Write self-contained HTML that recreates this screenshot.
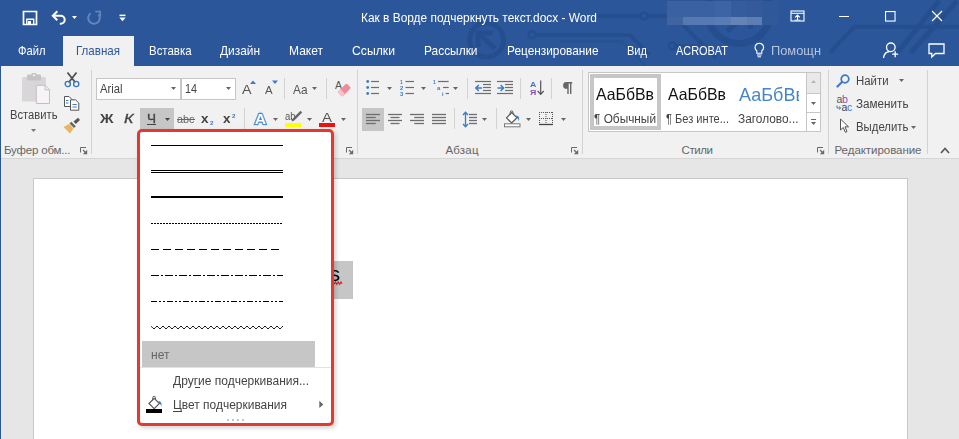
<!DOCTYPE html>
<html><head><meta charset="utf-8"><title>Word</title>
<style>
html,body{margin:0;padding:0;}
body{width:959px;height:439px;overflow:hidden;position:relative;background:#e6e6e6;font-family:"Liberation Sans",sans-serif;}
.r{position:absolute;display:block;}
.t{position:absolute;white-space:nowrap;line-height:1;transform-origin:0 0;display:block;}
</style></head><body>
<div class="r" style="left:0px;top:0px;width:959px;height:66px;background:#2b579a;"></div>
<svg class="r" style="left:0px;top:0px;" width="959" height="66" viewBox="0 0 959 66">
<g fill="none" stroke="#254e8f" stroke-width="4" stroke-linejoin="round">
<circle cx="486.500" cy="40" r="17" stroke-width="5"/>
<path d="M495 48.500L478.500 33.500M478 47V33H492.500" stroke-width="5"/>
<circle cx="532" cy="34.700" r="3.500" stroke-width="2.500"/>
<path d="M536.500 35H630L650 55" stroke-width="3.500"/>
<path d="M560 41.500H622L646 66" stroke-width="2.500" opacity="0.600"/>
<circle cx="644" cy="16" r="3.500" stroke-width="2.500"/>
<path d="M597 16H640M648 16H670" stroke-width="3.500"/>
<circle cx="672.500" cy="45.800" r="3.500" stroke-width="2.500"/>
<path d="M676.500 46H700" stroke-width="3"/>
<path d="M683 25L716 58" stroke-width="4"/>
<circle cx="739" cy="12" r="31.500" stroke-width="7"/>
<path d="M727 31L738 22" stroke-width="5"/>
<rect x="748" y="24" width="5" height="5" fill="#254e8f" stroke="none"/>
<path d="M830 52.500L854.500 26.700H959" stroke-width="4"/>
<path d="M897 53L939 1" stroke-width="5"/>
<path d="M910.500 53L957 1" stroke-width="5"/>
</g></svg>
<div class="r" style="left:0px;top:66px;width:959px;height:92px;background:#f1f1f1;"></div>
<div class="r" style="left:0px;top:158px;width:959px;height:1px;background:#d5d5d5;"></div>
<div class="r" style="left:0px;top:0px;width:1px;height:439px;background:#2b579a;"></div>
<div class="r" style="left:63px;top:36px;width:71px;height:31px;background:#f1f1f1;"></div>
<div class="r" style="left:33px;top:178px;width:875px;height:262px;background:#fff;box-sizing:border-box;border:1px solid #c8c8c8;border-bottom:none;"></div>
<span class="t" style="left:361.00px;top:10.50px;font-size:13px;color:#fff;transform:scaleX(0.9157);">Как в Ворде подчеркнуть текст.docx - Word</span>
<span class="t" style="left:17.50px;top:44.00px;font-size:13px;color:#fff;transform:scaleX(0.8604);">Файл</span>
<span class="t" style="left:76.00px;top:44.00px;font-size:13px;color:#2b579a;transform:scaleX(0.8892);">Главная</span>
<span class="t" style="left:149.00px;top:44.00px;font-size:13px;color:#fff;transform:scaleX(0.8796);">Вставка</span>
<span class="t" style="left:220.00px;top:44.00px;font-size:13px;color:#fff;transform:scaleX(0.9154);">Дизайн</span>
<span class="t" style="left:289.00px;top:44.00px;font-size:13px;color:#fff;transform:scaleX(0.9241);">Макет</span>
<span class="t" style="left:352.00px;top:44.00px;font-size:13px;color:#fff;transform:scaleX(0.9395);">Ссылки</span>
<span class="t" style="left:424.00px;top:44.00px;font-size:13px;color:#fff;transform:scaleX(0.9169);">Рассылки</span>
<span class="t" style="left:507.00px;top:44.00px;font-size:13px;color:#fff;transform:scaleX(0.9115);">Рецензирование</span>
<span class="t" style="left:627.00px;top:44.00px;font-size:13px;color:#fff;transform:scaleX(0.8504);">Вид</span>
<span class="t" style="left:676.00px;top:44.00px;font-size:13px;color:#fff;transform:scaleX(0.8404);">ACROBAT</span>
<span class="t" style="left:771.00px;top:44.00px;font-size:13px;color:#b4c4de;transform:scaleX(0.9878);">Помощн</span>
<svg class="r" style="left:22px;top:10px;" width="16" height="16" viewBox="0 0 16 16"><path d="M1.500 1.500H14.500V14.500H1.500Z" fill="none" stroke="#fff" stroke-width="1.700"/><path d="M4.800 14.500V9.200H11.700V14.500" fill="none" stroke="#fff" stroke-width="1.400"/><rect x="6" y="11" width="3" height="3.500" fill="#fff"/></svg>
<svg class="r" style="left:51px;top:10px;" width="16" height="15" viewBox="0 0 16 15"><path d="M2.500 5.700H9.700A4 4 0 0 1 9.700 13.700H8.800" fill="none" stroke="#fff" stroke-width="2"/><path d="M6.300 1.200L1.800 5.700L6.300 10.200" fill="none" stroke="#fff" stroke-width="2"/></svg>
<svg class="r" style="left:72px;top:16px;" width="5" height="3" viewBox="0 0 5 3"><path d="M0 0H5L2.5 3Z" fill="#fff"/></svg>
<svg class="r" style="left:86px;top:10px;" width="16" height="15" viewBox="0 0 16 15"><path d="M4.670 3.250A5.800 5.800 0 1 0 12.440 4.270" fill="none" stroke="#6484bd" stroke-width="2"/><path d="M9.300 1.700H14.200V6.600" fill="none" stroke="#6484bd" stroke-width="1.800"/></svg>
<svg class="r" style="left:119px;top:14px;" width="7" height="8" viewBox="0 0 7 8"><rect x="0.500" y="0.600" width="6" height="1.500" fill="#fff"/><path d="M0.300 3.500H6.700L3.500 7.200Z" fill="#fff"/></svg>
<svg class="r" style="left:790px;top:10px;" width="15" height="12" viewBox="0 0 15 12"><rect x="1" y="1" width="13" height="10" fill="none" stroke="#fff" stroke-width="1.100"/><path d="M1 3.300H14" stroke="#fff" stroke-width="1"/><path d="M7.500 10V5.200M5.200 7.300L7.500 5L9.800 7.300" fill="none" stroke="#fff" stroke-width="1.100"/><path d="M4.500 10.200H10.500" stroke="#fff" stroke-width="0.800"/></svg>
<div class="r" style="left:839px;top:16px;width:10px;height:1px;background:#fff;"></div>
<svg class="r" style="left:885px;top:11px;" width="11" height="11" viewBox="0 0 11 11"><rect x="0.550" y="0.550" width="9.500" height="9.500" fill="none" stroke="#fff" stroke-width="1.100"/></svg>
<svg class="r" style="left:931px;top:10px;" width="12" height="12" viewBox="0 0 12 12"><path d="M1 1L11 11M11 1L1 11" stroke="#fff" stroke-width="1.200" fill="none"/></svg>
<div class="r" style="left:667px;top:1px;width:48px;height:16px;background:#3a62a2;"></div>
<div class="r" style="left:715px;top:1px;width:16px;height:16px;background:#3d64a3;"></div>
<div class="r" style="left:731px;top:1px;width:16px;height:16px;background:#355d9d;"></div>
<div class="r" style="left:747px;top:1px;width:16px;height:16px;background:#345a9b;"></div>
<div class="r" style="left:763px;top:1px;width:15px;height:16px;background:#2e5899;"></div>
<div class="r" style="left:667px;top:17px;width:16px;height:8px;background:#41639f;"></div>
<div class="r" style="left:683px;top:17px;width:32px;height:8px;background:#5779b2;"></div>
<div class="r" style="left:715px;top:17px;width:16px;height:8px;background:#5a7cb5;"></div>
<div class="r" style="left:731px;top:17px;width:16px;height:8px;background:#6683b6;"></div>
<div class="r" style="left:747px;top:17px;width:15px;height:8px;background:#5d7db3;"></div>
<div class="r" style="left:762px;top:17px;width:16px;height:8px;background:#30599a;"></div>
<svg class="r" style="left:754px;top:42px;" width="11" height="16" viewBox="0 0 11 16"><path d="M5.300 1.200A4.200 4.200 0 0 1 7.800 8.800V11.200H2.800V8.800A4.200 4.200 0 0 1 5.300 1.200Z" fill="none" stroke="#fff" stroke-width="1.100"/><path d="M3 13H7.600M3.600 14.800H7" stroke="#fff" stroke-width="1"/></svg>
<svg class="r" style="left:882px;top:41px;" width="18" height="18" viewBox="0 0 18 18"><circle cx="8.800" cy="6.300" r="4.300" fill="none" stroke="#fff" stroke-width="1.300"/><path d="M1.500 17C2 13 4.500 10.800 7.500 10.500" fill="none" stroke="#fff" stroke-width="1.300"/><path d="M13.200 10.200V16.200M10.200 13.200H16.200" stroke="#fff" stroke-width="1.300"/></svg>
<svg class="r" style="left:927px;top:42px;" width="19" height="17" viewBox="0 0 19 17"><path d="M2 2H17V11.500H8.500L4.800 15V11.500H2Z" fill="none" stroke="#fff" stroke-width="1.300"/></svg>
<svg class="r" style="left:22px;top:73px;" width="29" height="32" viewBox="0 0 29 32"><rect x="0" y="4" width="24" height="24.500" rx="1.500" fill="#d9d6d9"/><rect x="5" y="1.500" width="14" height="6" rx="1" fill="#c6c3c6"/><rect x="9.500" y="0" width="5" height="3.500" rx="1.200" fill="#c6c3c6"/><rect x="10.800" y="1.500" width="2.400" height="1.600" fill="#f1f1f1"/><path d="M14.300 12.300H23L27.500 16.800V30.500H14.300Z" fill="#f7f4f7" stroke="#c2bfc2" stroke-width="1"/><path d="M23 12.300V16.800H27.500" fill="none" stroke="#c2bfc2" stroke-width="1"/></svg>
<span class="t" style="left:10.00px;top:109.00px;font-size:12.5px;color:#444;transform:scaleX(0.8965);">Вставить</span>
<svg class="r" style="left:31px;top:129px;" width="5" height="3" viewBox="0 0 5 3"><path d="M0 0H5L2.5 3Z" fill="#777"/></svg>
<svg class="r" style="left:64px;top:71px;" width="16" height="17" viewBox="0 0 16 17"><path d="M3.500 1.500L11.300 11.500M12.500 1.500L4.700 11.500" stroke="#505050" stroke-width="1.800" fill="none"/><circle cx="3.800" cy="13" r="2.600" fill="none" stroke="#3a78c2" stroke-width="1.400"/><circle cx="12.200" cy="13" r="2.600" fill="none" stroke="#3a78c2" stroke-width="1.400"/></svg>
<svg class="r" style="left:63px;top:96px;" width="17" height="15" viewBox="0 0 17 15"><path d="M1.500 0.500H6L9 3.500V10.500H1.500Z" fill="#fff" stroke="#555" stroke-width="1"/><path d="M3 4.500H5.500M3 7H5.500" stroke="#3a7cc6" stroke-width="1"/><path d="M7.500 3.800H12.500L15.800 7V14.200H7.500Z" fill="#fff" stroke="#555" stroke-width="1"/><path d="M9.500 8.500H13.800M9.500 11H13.800" stroke="#3a7cc6" stroke-width="1"/></svg>
<svg class="r" style="left:63px;top:117px;" width="18" height="17" viewBox="0 0 18 17"><path d="M10.500 4.500L15 0.800L17 3L12.800 7Z" fill="#555"/><path d="M8.300 4.800L12.800 9.300L11 11L6.500 6.600Z" fill="#666"/><path d="M6 7L10.500 11.500L7 16.500L0.500 10Z" fill="#eab55c"/></svg>
<span class="t" style="left:4.00px;top:145.00px;font-size:11.5px;color:#666;letter-spacing:-0.189px;">Буфер обм...</span>
<svg class="r" style="left:80px;top:147px;" width="8" height="8" viewBox="0 0 8 8"><path d="M0.500 5.500V0.500H6" fill="none" stroke="#6a6a6a" stroke-width="1"/><path d="M7.200 2.800V7.200H2.800Z" fill="#6a6a6a"/><path d="M3 3L6 6" stroke="#6a6a6a" stroke-width="1.200"/></svg>
<div class="r" style="left:91px;top:70px;width:1px;height:84px;background:#d2d2d2;"></div>
<div class="r" style="left:96px;top:78px;width:85px;height:22px;background:#fff;box-sizing:border-box;border:1px solid #c6c6c6;"></div>
<div class="r" style="left:181px;top:78px;width:55px;height:22px;background:#fff;box-sizing:border-box;border:1px solid #c6c6c6;"></div>
<span class="t" style="left:99.50px;top:83.00px;font-size:12.5px;color:#444;transform:scaleX(0.8998);">Arial</span>
<svg class="r" style="left:171px;top:87px;" width="5" height="3" viewBox="0 0 5 3"><path d="M0 0H5L2.5 3Z" fill="#666"/></svg>
<span class="t" style="left:184.50px;top:83.00px;font-size:12.5px;color:#444;transform:scaleX(0.8631);">14</span>
<svg class="r" style="left:226px;top:87px;" width="5" height="3" viewBox="0 0 5 3"><path d="M0 0H5L2.5 3Z" fill="#666"/></svg>
<span class="t" style="left:242.00px;top:82.60px;font-size:13.5px;color:#555;transform:scaleX(1.0550);">A</span>
<svg class="r" style="left:250px;top:80px;" width="6" height="4" viewBox="0 0 6 4"><path d="M0 4H6L3 0.500Z" fill="#3a7cc6"/></svg>
<span class="t" style="left:265.00px;top:85.00px;font-size:11px;color:#555;transform:scaleX(1.0359);">A</span>
<svg class="r" style="left:272px;top:80px;" width="6" height="4" viewBox="0 0 6 4"><path d="M0 0.500H6L3 4Z" fill="#3a7cc6"/></svg>
<div class="r" style="left:284px;top:78px;width:1px;height:21px;background:#d2d2d2;"></div>
<span class="t" style="left:292.50px;top:82.60px;font-size:13.5px;color:#555;transform:scaleX(0.8781);">Aa</span>
<svg class="r" style="left:312px;top:87px;" width="5" height="3" viewBox="0 0 5 3"><path d="M0 0H5L2.5 3Z" fill="#666"/></svg>
<div class="r" style="left:326px;top:78px;width:1px;height:21px;background:#d2d2d2;"></div>
<svg class="r" style="left:334px;top:79px;" width="18" height="18" viewBox="0 0 18 18"><text x="1" y="9.500" font-family="Liberation Sans" font-size="10.500" fill="#555">A</text><g transform="rotate(-45 10 11)"><rect x="4" y="8" width="12.500" height="6.500" rx="1.500" fill="#f08a9b"/><rect x="4" y="8" width="4" height="6.500" rx="1.500" fill="#f8c3cc"/></g></svg>
<span class="t" style="left:100.00px;top:112.30px;font-size:13px;color:#444;font-weight:bold;transform:scaleX(1.1490);">Ж</span>
<span class="t" style="left:124.00px;top:112.30px;font-size:13.5px;color:#444;font-style:italic;transform:scaleX(1.1940);-webkit-text-stroke:0.35px #444;">К</span>
<div class="r" style="left:140px;top:108px;width:34px;height:22px;background:#c6c6c6;"></div>
<span class="t" style="left:147.00px;top:111.50px;font-size:13px;color:#444;transform:scaleX(1.0387);-webkit-text-stroke:0.35px #444;">Ч</span>
<div class="r" style="left:147px;top:124px;width:9px;height:1px;background:#444;"></div>
<svg class="r" style="left:164.8px;top:118px;" width="5" height="3" viewBox="0 0 5 3"><path d="M0 0H5L2.5 3Z" fill="#444"/></svg>
<span class="t" style="left:177.00px;top:114.00px;font-size:11.5px;color:#666;transform:scaleX(0.9438);">abc</span>
<div class="r" style="left:177px;top:119px;width:18px;height:1px;background:#666;"></div>
<span class="t" style="left:201.00px;top:112.00px;font-size:13px;color:#444;font-weight:bold;transform:scaleX(1.0373);">x</span>
<span class="t" style="left:209.70px;top:120.00px;font-size:6px;color:#3a7cc6;font-weight:bold;transform:scaleX(1.0489);">2</span>
<span class="t" style="left:223.00px;top:112.00px;font-size:13px;color:#444;font-weight:bold;transform:scaleX(1.0373);">x</span>
<span class="t" style="left:231.70px;top:112.50px;font-size:6px;color:#3a7cc6;font-weight:bold;transform:scaleX(1.0489);">2</span>
<div class="r" style="left:244px;top:108px;width:1px;height:21px;background:#d2d2d2;"></div>
<svg class="r" style="left:251px;top:109px;" width="19" height="19" viewBox="0 0 19 19"><defs><filter id="gl" x="-20%" y="-20%" width="140%" height="140%"><feGaussianBlur stdDeviation="0.600"/></filter></defs><text x="9.300" y="14.800" text-anchor="middle" font-family="Liberation Sans" font-size="15.500" font-weight="bold" fill="none" stroke="#8db8e8" stroke-width="2.600" filter="url(#gl)">A</text><text x="9.300" y="14.800" text-anchor="middle" font-family="Liberation Sans" font-size="15.500" font-weight="bold" fill="#fff" stroke="#3a7cc6" stroke-width="1.700" paint-order="stroke">A</text></svg>
<svg class="r" style="left:273px;top:118px;" width="5" height="3" viewBox="0 0 5 3"><path d="M0 0H5L2.5 3Z" fill="#666"/></svg>
<span class="t" style="left:284.50px;top:111.50px;font-size:10px;color:#555;transform:scaleX(0.9440);">ab</span>
<svg class="r" style="left:288px;top:110px;" width="15" height="13" viewBox="0 0 15 13"><path d="M12.500 0.800L14.200 2.500L6 10.700L3.500 11.500L4.300 9Z" fill="#666"/></svg>
<div class="r" style="left:285px;top:123px;width:16px;height:4px;background:#ffff00;"></div>
<svg class="r" style="left:307px;top:118px;" width="5" height="3" viewBox="0 0 5 3"><path d="M0 0H5L2.5 3Z" fill="#666"/></svg>
<span class="t" style="left:322.00px;top:111.00px;font-size:13px;color:#555;transform:scaleX(1.1533);">A</span>
<div class="r" style="left:319px;top:123px;width:16px;height:4px;background:#ee1111;"></div>
<svg class="r" style="left:341px;top:118px;" width="5" height="3" viewBox="0 0 5 3"><path d="M0 0H5L2.5 3Z" fill="#666"/></svg>
<svg class="r" style="left:346px;top:147px;" width="8" height="8" viewBox="0 0 8 8"><path d="M0.500 5.500V0.500H6" fill="none" stroke="#6a6a6a" stroke-width="1"/><path d="M7.200 2.800V7.200H2.800Z" fill="#6a6a6a"/><path d="M3 3L6 6" stroke="#6a6a6a" stroke-width="1.200"/></svg>
<div class="r" style="left:357px;top:70px;width:1px;height:84px;background:#d2d2d2;"></div>
<svg class="r" style="left:366px;top:78px;" width="22" height="20" viewBox="0 0 22 20"><rect x="5" y="2.90" width="8" height="1.2" fill="#6e6e6e"/><rect x="5" y="8.90" width="8" height="1.2" fill="#6e6e6e"/><rect x="5" y="14.90" width="8" height="1.2" fill="#6e6e6e"/></svg>
<svg class="r" style="left:366px;top:78px;" width="4" height="20" viewBox="0 0 4 20"><circle cx="1.700" cy="3.500" r="1.400" fill="#3a7cc6"/><circle cx="1.700" cy="9.500" r="1.400" fill="#3a7cc6"/><circle cx="1.700" cy="15.500" r="1.400" fill="#3a7cc6"/></svg>
<svg class="r" style="left:387px;top:87px;" width="5" height="3" viewBox="0 0 5 3"><path d="M0 0H5L2.5 3Z" fill="#666"/></svg>
<svg class="r" style="left:400px;top:78px;" width="22" height="20" viewBox="0 0 22 20"><rect x="5.5" y="2.90" width="8.5" height="1.2" fill="#6e6e6e"/><rect x="5.5" y="8.90" width="8.5" height="1.2" fill="#6e6e6e"/><rect x="5.5" y="14.90" width="8.5" height="1.2" fill="#6e6e6e"/></svg>
<span class="t" style="left:400.30px;top:79.00px;font-size:6px;color:#3a7cc6;font-weight:bold;transform:scaleX(0.8091);">1</span>
<span class="t" style="left:400.00px;top:85.00px;font-size:6px;color:#3a7cc6;font-weight:bold;transform:scaleX(0.9889);">2</span>
<span class="t" style="left:400.00px;top:91.00px;font-size:6px;color:#3a7cc6;font-weight:bold;transform:scaleX(0.9889);">3</span>
<svg class="r" style="left:421px;top:87px;" width="5" height="3" viewBox="0 0 5 3"><path d="M0 0H5L2.5 3Z" fill="#666"/></svg>
<svg class="r" style="left:433px;top:78px;" width="22" height="20" viewBox="0 0 22 20"><rect x="5" y="2.90" width="10.7" height="1.2" fill="#6e6e6e"/><rect x="10" y="8.90" width="5.699999999999999" height="1.2" fill="#6e6e6e"/><rect x="12.7" y="14.90" width="3.3000000000000007" height="1.2" fill="#6e6e6e"/></svg>
<span class="t" style="left:433.00px;top:79.00px;font-size:6px;color:#3a7cc6;font-weight:bold;transform:scaleX(0.8091);">1</span>
<span class="t" style="left:437.30px;top:85.00px;font-size:6px;color:#3a7cc6;font-weight:bold;transform:scaleX(0.9889);">a</span>
<span class="t" style="left:441.50px;top:91.00px;font-size:6px;color:#3a7cc6;font-weight:bold;transform:scaleX(0.8998);">i</span>
<svg class="r" style="left:453px;top:87px;" width="5" height="3" viewBox="0 0 5 3"><path d="M0 0H5L2.5 3Z" fill="#666"/></svg>
<div class="r" style="left:467px;top:78px;width:1px;height:21px;background:#d2d2d2;"></div>
<svg class="r" style="left:475px;top:78px;" width="22" height="20" viewBox="0 0 22 20"><rect x="0" y="2.90" width="16" height="1.2" fill="#6e6e6e"/><rect x="8" y="5.90" width="8" height="1.2" fill="#6e6e6e"/><rect x="8" y="8.90" width="8" height="1.2" fill="#6e6e6e"/><rect x="8" y="11.90" width="8" height="1.2" fill="#6e6e6e"/><rect x="0" y="14.90" width="16" height="1.2" fill="#6e6e6e"/></svg>
<svg class="r" style="left:475px;top:84px;" width="8" height="8" viewBox="0 0 8 8"><path d="M7 4H1.200M3.800 1L0.900 4L3.800 7" fill="none" stroke="#3a7cc6" stroke-width="1.500"/></svg>
<svg class="r" style="left:497px;top:78px;" width="22" height="20" viewBox="0 0 22 20"><rect x="0" y="2.90" width="16" height="1.2" fill="#6e6e6e"/><rect x="8" y="5.90" width="8" height="1.2" fill="#6e6e6e"/><rect x="8" y="8.90" width="8" height="1.2" fill="#6e6e6e"/><rect x="8" y="11.90" width="8" height="1.2" fill="#6e6e6e"/><rect x="0" y="14.90" width="16" height="1.2" fill="#6e6e6e"/></svg>
<svg class="r" style="left:497px;top:84px;" width="8" height="8" viewBox="0 0 8 8"><path d="M0.500 4H6.300M3.700 1L6.600 4L3.700 7" fill="none" stroke="#3a7cc6" stroke-width="1.500"/></svg>
<div class="r" style="left:520px;top:78px;width:1px;height:21px;background:#d2d2d2;"></div>
<span class="t" style="left:530.00px;top:80.50px;font-size:8px;color:#3a7cc6;font-weight:bold;transform:scaleX(1.0905);">А</span>
<span class="t" style="left:530.00px;top:88.50px;font-size:8px;color:#8a4fb0;font-weight:bold;transform:scaleX(1.0957);">Я</span>
<svg class="r" style="left:537px;top:80px;" width="8" height="16" viewBox="0 0 8 16"><path d="M3.700 0.500V14M0.700 11L3.700 14.300L6.700 11" fill="none" stroke="#555" stroke-width="1.200"/></svg>
<div class="r" style="left:551px;top:78px;width:1px;height:21px;background:#d2d2d2;"></div>
<svg class="r" style="left:562px;top:82px;" width="11" height="13" viewBox="0 0 11 13"><path d="M4.500 0A3.400 3.400 0 0 0 4.500 6.800H5.300V12H6.700V1.500H8V12H9.400V1.500H10.200V0Z" fill="#666"/></svg>
<div class="r" style="left:582px;top:70px;width:1px;height:84px;background:#d2d2d2;"></div>
<div class="r" style="left:362px;top:108px;width:22px;height:23px;background:#c6c6c6;"></div>
<svg class="r" style="left:366px;top:111px;" width="22" height="20" viewBox="0 0 22 20"><rect x="0" y="2.85" width="14" height="1.3" fill="#6e6e6e"/><rect x="0" y="5.85" width="9.7" height="1.3" fill="#6e6e6e"/><rect x="0" y="8.85" width="14" height="1.3" fill="#6e6e6e"/><rect x="0" y="11.85" width="9.7" height="1.3" fill="#6e6e6e"/></svg>
<svg class="r" style="left:388px;top:111px;" width="22" height="20" viewBox="0 0 22 20"><rect x="0" y="2.85" width="14" height="1.3" fill="#6e6e6e"/><rect x="2.5" y="5.85" width="9.0" height="1.3" fill="#6e6e6e"/><rect x="0" y="8.85" width="14" height="1.3" fill="#6e6e6e"/><rect x="2.5" y="11.85" width="9.0" height="1.3" fill="#6e6e6e"/></svg>
<svg class="r" style="left:410px;top:111px;" width="22" height="20" viewBox="0 0 22 20"><rect x="0" y="2.85" width="14" height="1.3" fill="#6e6e6e"/><rect x="4.3" y="5.85" width="9.7" height="1.3" fill="#6e6e6e"/><rect x="0" y="8.85" width="14" height="1.3" fill="#6e6e6e"/><rect x="4.3" y="11.85" width="9.7" height="1.3" fill="#6e6e6e"/></svg>
<svg class="r" style="left:432px;top:111px;" width="22" height="20" viewBox="0 0 22 20"><rect x="0" y="2.85" width="14" height="1.3" fill="#6e6e6e"/><rect x="0" y="5.85" width="14" height="1.3" fill="#6e6e6e"/><rect x="0" y="8.85" width="14" height="1.3" fill="#6e6e6e"/><rect x="0" y="11.85" width="14" height="1.3" fill="#6e6e6e"/></svg>
<div class="r" style="left:454px;top:108px;width:1px;height:21px;background:#d2d2d2;"></div>
<svg class="r" style="left:469px;top:111px;" width="22" height="20" viewBox="0 0 22 20"><rect x="0" y="2.85" width="8" height="1.3" fill="#6e6e6e"/><rect x="0" y="5.85" width="8" height="1.3" fill="#6e6e6e"/><rect x="0" y="8.85" width="8" height="1.3" fill="#6e6e6e"/><rect x="0" y="11.85" width="8" height="1.3" fill="#6e6e6e"/></svg>
<svg class="r" style="left:462px;top:111px;" width="7" height="17" viewBox="0 0 7 17"><path d="M3.500 1.200V15.800M1 4L3.500 1.200L6 4M1 13L3.500 15.800L6 13" fill="none" stroke="#3a7cc6" stroke-width="1.300"/></svg>
<svg class="r" style="left:482px;top:118px;" width="5" height="3" viewBox="0 0 5 3"><path d="M0 0H5L2.5 3Z" fill="#666"/></svg>
<div class="r" style="left:496px;top:108px;width:1px;height:21px;background:#d2d2d2;"></div>
<svg class="r" style="left:503px;top:110px;" width="19" height="18" viewBox="0 0 19 18"><rect x="1.500" y="13.800" width="15.500" height="3" fill="#fff" stroke="#777" stroke-width="1"/><path d="M3.500 7.800L8.700 2.600L14 7.800L8.700 13Z" fill="#fff" stroke="#555" stroke-width="1.200"/><path d="M7.200 5V2.300A1.400 1.400 0 0 1 10 2.300V4" fill="none" stroke="#555" stroke-width="1"/><path d="M13.500 5.500C16 6 17 8.500 15.600 11.300C15.600 9 15 8 13 7.200Z" fill="#3a7cc6"/></svg>
<svg class="r" style="left:526px;top:118px;" width="5" height="3" viewBox="0 0 5 3"><path d="M0 0H5L2.5 3Z" fill="#666"/></svg>
<svg class="r" style="left:539px;top:112px;" width="14" height="14" viewBox="0 0 14 14"><g stroke="#555" stroke-width="1" stroke-dasharray="1 1"><path d="M0 0.500H14M0.500 0V12M13.500 0V12M7 0V12M0 6.500H14"/></g><path d="M0 12.500H14" stroke="#444" stroke-width="1.300"/></svg>
<svg class="r" style="left:560.5px;top:118px;" width="5" height="3" viewBox="0 0 5 3"><path d="M0 0H5L2.5 3Z" fill="#666"/></svg>
<span class="t" style="left:445.50px;top:145.00px;font-size:11.5px;color:#666;letter-spacing:0.185px;">Абзац</span>
<svg class="r" style="left:571px;top:147px;" width="8" height="8" viewBox="0 0 8 8"><path d="M0.500 5.500V0.500H6" fill="none" stroke="#6a6a6a" stroke-width="1"/><path d="M7.200 2.800V7.200H2.800Z" fill="#6a6a6a"/><path d="M3 3L6 6" stroke="#6a6a6a" stroke-width="1.200"/></svg>
<div class="r" style="left:588px;top:72px;width:233px;height:60px;background:#fff;box-sizing:border-box;border:1px solid #c6c6c6;"></div>
<div class="r" style="left:590px;top:74px;width:71px;height:56px;background:#fff;box-sizing:border-box;border:4px solid #c6c6c6;"></div>
<span class="t" style="left:596.00px;top:86.00px;font-size:16.5px;color:#111;transform:scaleX(0.9600);">АаБбВв</span>
<span class="t" style="left:594.00px;top:113.00px;font-size:12.5px;color:#444;transform:scaleX(0.9475);">¶ Обычный</span>
<span class="t" style="left:668.00px;top:86.00px;font-size:16.5px;color:#111;transform:scaleX(0.9600);">АаБбВв</span>
<span class="t" style="left:666.00px;top:113.00px;font-size:12.5px;color:#444;transform:scaleX(0.8859);">¶ Без инте...</span>
<div class="r" style="left:738px;top:78px;width:61px;height:28px;overflow:hidden;">
<span class="t" style="left:1.00px;top:7.50px;font-size:18.5px;color:#4686c8;transform:scaleX(0.9743);">АаБбВв</span>
</div>
<span class="t" style="left:738.00px;top:113.00px;font-size:12.5px;color:#444;transform:scaleX(0.9495);">Заголово...</span>
<div class="r" style="left:806px;top:73px;width:14px;height:58px;background:#fff;box-sizing:border-box;border-left:1px solid #c6c6c6;"></div>
<div class="r" style="left:807px;top:73px;width:13px;height:20px;background:#e9e9e9;"></div>
<div class="r" style="left:806px;top:93px;width:14px;height:1px;background:#c6c6c6;"></div>
<div class="r" style="left:806px;top:112px;width:14px;height:1px;background:#c6c6c6;"></div>
<svg class="r" style="left:811px;top:80px;" width="5" height="3" viewBox="0 0 5 3"><path d="M0 3H5L2.500 0Z" fill="#b8b8b8"/></svg>
<svg class="r" style="left:811px;top:102px;" width="5" height="3" viewBox="0 0 5 3"><path d="M0 0H5L2.5 3Z" fill="#666"/></svg>
<div class="r" style="left:811px;top:119px;width:5px;height:1px;background:#666;"></div>
<svg class="r" style="left:811px;top:122px;" width="5" height="3" viewBox="0 0 5 3"><path d="M0 0H5L2.5 3Z" fill="#666"/></svg>
<span class="t" style="left:681.50px;top:145.00px;font-size:11.5px;color:#666;letter-spacing:-0.407px;">Стили</span>
<svg class="r" style="left:817px;top:147px;" width="8" height="8" viewBox="0 0 8 8"><path d="M0.500 5.500V0.500H6" fill="none" stroke="#6a6a6a" stroke-width="1"/><path d="M7.200 2.800V7.200H2.800Z" fill="#6a6a6a"/><path d="M3 3L6 6" stroke="#6a6a6a" stroke-width="1.200"/></svg>
<div class="r" style="left:828px;top:70px;width:1px;height:84px;background:#d2d2d2;"></div>
<svg class="r" style="left:836px;top:74px;" width="15" height="14" viewBox="0 0 15 14"><circle cx="9" cy="5" r="3.800" fill="none" stroke="#3a7cc6" stroke-width="1.700"/><path d="M6 8L1.500 12.500" stroke="#3a7cc6" stroke-width="2.200" stroke-linecap="round"/></svg>
<span class="t" style="left:855.50px;top:74.50px;font-size:12.5px;color:#444;transform:scaleX(0.9112);">Найти</span>
<svg class="r" style="left:899px;top:79px;" width="5" height="3" viewBox="0 0 5 3"><path d="M0 0H5L2.5 3Z" fill="#666"/></svg>
<svg class="r" style="left:836px;top:95px;" width="17" height="16" viewBox="0 0 17 16"><text x="0.500" y="8" font-family="Liberation Sans" font-size="10.500" fill="#555">a</text><text x="6" y="8" font-family="Liberation Sans" font-size="10.500" fill="#8a4fb0">b</text><text x="5.500" y="15.500" font-family="Liberation Sans" font-size="10.500" fill="#444">a</text><text x="11" y="15.500" font-family="Liberation Sans" font-size="10.500" fill="#3a7cc6">c</text><path d="M1 10.500V13H4.500M3 11.500L4.700 13L3 14.500" fill="none" stroke="#3a7cc6" stroke-width="1"/></svg>
<span class="t" style="left:855.50px;top:97.50px;font-size:12.5px;color:#444;transform:scaleX(0.9347);">Заменить</span>
<svg class="r" style="left:839px;top:118px;" width="11" height="16" viewBox="0 0 11 16"><path d="M1.500 1V12L4.300 9.500L6.300 14.300L8 13.600L6 8.800H9.500Z" fill="#fff" stroke="#555" stroke-width="1"/></svg>
<span class="t" style="left:855.50px;top:121.00px;font-size:12.5px;color:#444;transform:scaleX(0.9104);">Выделить</span>
<svg class="r" style="left:911px;top:126px;" width="5" height="3" viewBox="0 0 5 3"><path d="M0 0H5L2.5 3Z" fill="#666"/></svg>
<span class="t" style="left:834.50px;top:145.00px;font-size:11.5px;color:#666;letter-spacing:-0.046px;">Редактирование</span>
<div class="r" style="left:927px;top:70px;width:1px;height:84px;background:#d2d2d2;"></div>
<svg class="r" style="left:940px;top:147px;" width="10" height="7" viewBox="0 0 10 7"><path d="M1 6L5 1.500L9 6" fill="none" stroke="#555" stroke-width="1.600"/></svg>
<div class="r" style="left:334px;top:261px;width:19px;height:38px;background:#c6c6c6;"></div>
<span class="t" style="left:329.50px;top:263.00px;font-size:21px;color:#000;">s</span>
<svg class="r" style="left:334px;top:281px;" width="10" height="5" viewBox="0 0 10 5"><path d="M0 3.300L1.400 1L2.800 3.300L4.200 1L5.600 3.300L7 1L8 2.800" fill="none" stroke="#e02020" stroke-width="1.200"/></svg>
<div class="r" style="left:137px;top:129px;width:197px;height:297px;box-sizing:border-box;border:3px solid #e23a30;border-radius:5px;background:#fff;box-shadow:2px 2px 4px rgba(0,0,0,0.18);"></div>
<div class="r" style="left:151px;top:145px;width:132px;height:1px;background:#000;"></div>
<div class="r" style="left:151px;top:170px;width:132px;height:1px;background:#000;"></div>
<div class="r" style="left:151px;top:172px;width:132px;height:1px;background:#000;"></div>
<div class="r" style="left:151px;top:196px;width:132px;height:2px;background:#000;"></div>
<svg class="r" style="left:151px;top:223px;" width="131" height="1" viewBox="0 0 131 1"><path d="M0 0.5H131" stroke="#000" stroke-width="1" stroke-dasharray="2 1" shape-rendering="crispEdges"/></svg>
<svg class="r" style="left:151px;top:249px;" width="128" height="1" viewBox="0 0 128 1"><path d="M0 0.5H128" stroke="#000" stroke-width="1" stroke-dasharray="8 4" shape-rendering="crispEdges"/></svg>
<svg class="r" style="left:151px;top:275px;" width="132" height="1" viewBox="0 0 132 1"><path d="M0 0.5H132" stroke="#000" stroke-width="1" stroke-dasharray="8 2 2 2" shape-rendering="crispEdges"/></svg>
<svg class="r" style="left:151px;top:301px;" width="132" height="1" viewBox="0 0 132 1"><path d="M0 0.5H132" stroke="#000" stroke-width="1" stroke-dasharray="6 2 2 2 2 2" shape-rendering="crispEdges"/></svg>
<svg class="r" style="left:151px;top:324.7px;" width="132" height="5" viewBox="0 0 132 5"><path d="M0 1.2Q0.8 2 1.5 2.5Q3.00 5.4 4.50 2.5T7.50 2.5Q9.00 5.4 10.50 2.5T13.50 2.5Q15.00 5.4 16.50 2.5T19.50 2.5Q21.00 5.4 22.50 2.5T25.50 2.5Q27.00 5.4 28.50 2.5T31.50 2.5Q33.00 5.4 34.50 2.5T37.50 2.5Q39.00 5.4 40.50 2.5T43.50 2.5Q45.00 5.4 46.50 2.5T49.50 2.5Q51.00 5.4 52.50 2.5T55.50 2.5Q57.00 5.4 58.50 2.5T61.50 2.5Q63.00 5.4 64.50 2.5T67.50 2.5Q69.00 5.4 70.50 2.5T73.50 2.5Q75.00 5.4 76.50 2.5T79.50 2.5Q81.00 5.4 82.50 2.5T85.50 2.5Q87.00 5.4 88.50 2.5T91.50 2.5Q93.00 5.4 94.50 2.5T97.50 2.5Q99.00 5.4 100.50 2.5T103.50 2.5Q105.00 5.4 106.50 2.5T109.50 2.5Q111.00 5.4 112.50 2.5T115.50 2.5Q117.00 5.4 118.50 2.5T121.50 2.5Q123.00 5.4 124.50 2.5T127.50 2.5Q129.00 5.4 130.50 2.5T133.50 2.5" fill="none" stroke="#000" stroke-width="0.950"/></svg>
<div class="r" style="left:142px;top:341px;width:173px;height:26px;background:#c6c6c6;"></div>
<span class="t" style="left:150.50px;top:349.00px;font-size:12px;color:#666;transform:scaleX(1.0055);">нет</span>
<div class="r" style="left:140px;top:367px;width:191px;height:1px;background:#e2e2e2;"></div>
<span class="t" style="left:173.00px;top:375.00px;font-size:12.5px;color:#444;transform:scaleX(0.9603);">Другие подчеркивания...</span>
<div class="r" style="left:195px;top:386.5px;width:5px;height:1.0px;background:#444;"></div>
<span class="t" style="left:173.00px;top:399.00px;font-size:12.5px;color:#444;transform:scaleX(0.9564);">Цвет подчеркивания</span>
<div class="r" style="left:173px;top:410.5px;width:9px;height:1.0px;background:#444;"></div>
<svg class="r" style="left:319px;top:400px;" width="5" height="9" viewBox="0 0 5 9"><path d="M0.300 0.800L4.300 4.400L0.300 8Z" fill="#666"/></svg>
<svg class="r" style="left:146px;top:395px;" width="17" height="19" viewBox="0 0 17 19"><path d="M3 8.500L8.200 3.300L13.400 8.500L8.200 13.700Z" fill="#fff" stroke="#555" stroke-width="1.100"/><path d="M6.700 5.500V2.700A1.400 1.400 0 0 1 9.500 2.700V4.500" fill="none" stroke="#555" stroke-width="0.900"/><path d="M12.800 6C15.300 6.500 16.300 9 15 11.800C15 9.500 14.300 8.500 12.300 7.700Z" fill="#3a7cc6"/><rect x="0" y="14" width="16" height="4" fill="#000"/></svg>
<div class="r" style="left:227px;top:418.5px;width:2px;height:2.0px;background:#c2c6ce;"></div>
<div class="r" style="left:232px;top:418.5px;width:2px;height:2.0px;background:#c2c6ce;"></div>
<div class="r" style="left:237px;top:418.5px;width:2px;height:2.0px;background:#c2c6ce;"></div>
<div class="r" style="left:242px;top:418.5px;width:2px;height:2.0px;background:#c2c6ce;"></div>
</body></html>
